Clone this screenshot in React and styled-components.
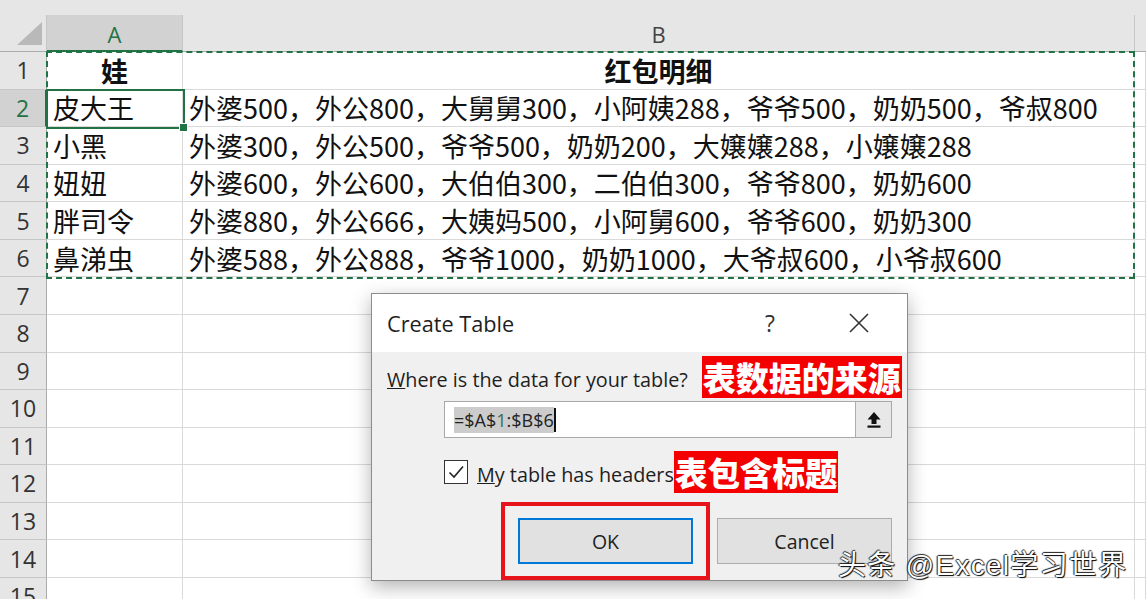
import styled, { createGlobalStyle } from 'styled-components';

const GlobalStyle = createGlobalStyle`
  html, body {
    margin: 0;
    padding: 0;
    background: #ffffff;
    overflow: hidden;
  }
`;

const green = '#217346';

const rows = [
  ['娃', '红包明细'],
  ['皮大王', '外婆500，外公800，大舅舅300，小阿姨288，爷爷500，奶奶500，爷叔800'],
  ['小黑', '外婆300，外公500，爷爷500，奶奶200，大嬢嬢288，小嬢嬢288'],
  ['妞妞', '外婆600，外公600，大伯伯300，二伯伯300，爷爷800，奶奶600'],
  ['胖司令', '外婆880，外公666，大姨妈500，小阿舅600，爷爷600，奶奶300'],
  ['鼻涕虫', '外婆588，外公888，爷爷1000，奶奶1000，大爷叔600，小爷叔600'],
  ['', ''], ['', ''], ['', ''], ['', ''], ['', ''], ['', ''], ['', ''], ['', ''], ['', ''],
];

const App = () => {
  return (
    <>
      <GlobalStyle />
      <Sheet>
        <TopStrip />
        <Grid>
          <Corner>
            <CornerTriangle />
          </Corner>
          <ColHead $selected>A</ColHead>
          <ColHead>B</ColHead>
          <ColHead $blank />
          {rows.map(([a, b], i) => (
            <Row key={i}>
              <RowHead $selected={i === 1}>{i + 1}</RowHead>
              <Cell $center={i === 0} $bold={i === 0}>{a}</Cell>
              <Cell $center={i === 0} $bold={i === 0}>{b}</Cell>
              <Cell />
            </Row>
          ))}
        </Grid>

        <CopyRange />
        <ActiveCell>
          <FillHandle />
        </ActiveCell>

        <Dialog>
          <TitleBar>
            <Title>Create Table</Title>
            <TitleButton>?</TitleButton>
            <TitleButton $close>
              <svg width="22" height="22" viewBox="0 0 22 22">
                <path d="M2 2 L20 20 M20 2 L2 20" stroke="#333" strokeWidth="1.6" />
              </svg>
            </TitleButton>
          </TitleBar>
          <DialogBody>
            <LineRow>
              <Label><u>W</u>here is the data for your table?</Label>
              <Note>表数据的来源</Note>
            </LineRow>
            <RangeInput>
              <RangeText>
                <Selected>=$A$<Ref>1</Ref>:$B$6</Selected>
                <Caret />
              </RangeText>
              <CollapseButton>
                <svg width="16" height="18" viewBox="0 0 16 18">
                  <polygon points="8,1 14.5,8.5 10.5,8.5 10.5,13 5.5,13 5.5,8.5 1.5,8.5" fill="#111" />
                  <rect x="1.5" y="14.5" width="13" height="2.2" fill="#111" />
                </svg>
              </CollapseButton>
            </RangeInput>
            <CheckRow>
              <CheckBox>
                <svg width="20" height="20" viewBox="0 0 20 20">
                  <polyline points="3.5,10.5 8,15 17,4.5" fill="none" stroke="#222" strokeWidth="1.6" />
                </svg>
              </CheckBox>
              <Label><u>M</u>y table has headers</Label>
              <Note $small>表包含标题</Note>
            </CheckRow>
            <ButtonRow>
              <Highlight>
                <DialogButton $default>OK</DialogButton>
              </Highlight>
              <DialogButton>Cancel</DialogButton>
            </ButtonRow>
          </DialogBody>
        </Dialog>

        <Watermark>头条 @Excel学习世界</Watermark>
      </Sheet>
    </>
  );
};

const Sheet = styled.div`
  position: relative;
  width: 1146px;
  height: 599px;
  overflow: hidden;
  background: #ffffff;
`;

const TopStrip = styled.div`
  height: 15px;
  background: #e6e6e6;
`;

const Grid = styled.div`
  display: grid;
  grid-template-columns: 47px 136px 952px 1fr;
  grid-template-rows: 37px;
  grid-auto-rows: 37.57px;
`;

const Row = styled.div`
  display: contents;
`;

const Corner = styled.div`
  position: relative;
  background: #e6e6e6;
  border-right: 1px solid #c6c6c6;
  border-bottom: 1px solid #ababab;
  box-sizing: border-box;
`;

const CornerTriangle = styled.div`
  position: absolute;
  right: 4px;
  bottom: 6px;
  width: 25px;
  height: 23px;
  background: #b9b9b9;
  clip-path: polygon(100% 0, 100% 100%, 0 100%);
`;

const ColHead = styled.div`
  display: flex;
  align-items: center;
  justify-content: center;
  box-sizing: border-box;
  background: ${(p) => (p.$selected ? '#d2d2d2' : '#e6e6e6')};
  color: ${(p) => (p.$selected ? green : '#444')};
  border-right: ${(p) => (p.$blank ? 'none' : '1px solid #c6c6c6')};
  border-bottom: ${(p) => (p.$selected ? `2px solid ${green}` : '1px solid #ababab')};
  font-family: 'Open Sans', 'Liberation Sans', sans-serif;
  font-size: 22px;
  padding-top: 2px;
`;

const RowHead = styled.div`
  display: flex;
  align-items: center;
  justify-content: center;
  box-sizing: border-box;
  background: ${(p) => (p.$selected ? '#d2d2d2' : '#e6e6e6')};
  color: ${(p) => (p.$selected ? green : '#333')};
  border-right: ${(p) => (p.$selected ? `2px solid ${green}` : '1px solid #ababab')};
  border-bottom: 1px solid #c6c6c6;
  font-family: 'Open Sans', 'Liberation Sans', sans-serif;
  font-size: 23px;
`;

const Cell = styled.div`
  display: flex;
  align-items: center;
  justify-content: ${(p) => (p.$center ? 'center' : 'flex-start')};
  box-sizing: border-box;
  padding-left: ${(p) => (p.$center ? '0' : '6px')};
  border-right: 1px solid #d9d9d9;
  border-bottom: 1px solid #d9d9d9;
  font-family: 'Noto Sans CJK SC', sans-serif;
  font-size: 27px;
  font-weight: ${(p) => (p.$bold ? 700 : 400)};
  line-height: 1;
  color: #111;
  white-space: nowrap;
  overflow: hidden;
`;

const CopyRange = styled.div`
  position: absolute;
  left: 46px;
  top: 51px;
  width: 1089px;
  height: 228px;
  box-sizing: border-box;
  border: 2px dashed ${green};
  pointer-events: none;
`;

const ActiveCell = styled.div`
  position: absolute;
  left: 46px;
  top: 89px;
  width: 139px;
  height: 40px;
  box-sizing: border-box;
  border: 2px solid ${green};
`;

const FillHandle = styled.div`
  position: absolute;
  right: -5px;
  bottom: -5px;
  width: 7px;
  height: 7px;
  background: ${green};
  border: 1px solid #ffffff;
`;

const Dialog = styled.div`
  position: absolute;
  left: 371px;
  top: 293px;
  width: 537px;
  height: 288px;
  box-sizing: border-box;
  display: flex;
  flex-direction: column;
  border: 1px solid #8c8c8c;
  background: #f0f0f0;
  box-shadow: 0 6px 18px rgba(0, 0, 0, 0.3);
  font-family: 'Open Sans', 'Noto Sans', sans-serif;
  color: #1e1e1e;
`;

const TitleBar = styled.div`
  display: flex;
  align-items: center;
  height: 58px;
  padding: 0 0 0 15px;
  background: #ffffff;
`;

const Title = styled.div`
  flex: 1;
  font-size: 21.7px;
  padding-top: 1px;
`;

const TitleButton = styled.div`
  display: flex;
  align-items: center;
  justify-content: center;
  width: ${(p) => (p.$close ? '72px' : '60px')};
  margin-right: ${(p) => (p.$close ? '12px' : '23px')};
  font-size: 23px;
  color: #333;
`;

const DialogBody = styled.div`
  flex: 1;
  display: flex;
  flex-direction: column;
  padding: 4px 15px 0 15px;
`;

const LineRow = styled.div`
  display: flex;
  align-items: center;
  height: 42px;
  gap: 14px;
`;

const Label = styled.span`
  flex-shrink: 0;
  font-size: 19.8px;
  color: #1e1e1e;
  white-space: nowrap;
  padding-top: 4px;
`;

const Note = styled.span`
  flex-shrink: 0;
  display: inline-flex;
  align-items: center;
  height: 42px;
  padding: 0 1px;
  background: #f40000;
  color: #ffffff;
  font-family: 'Noto Sans CJK SC', sans-serif;
  font-weight: 900;
  font-size: ${(p) => (p.$small ? '32.5px' : '33px')};
  line-height: 1;
  white-space: nowrap;
`;

const RangeInput = styled.div`
  display: flex;
  align-items: center;
  justify-content: space-between;
  height: 37px;
  margin: 3px 0 0 57px;
  box-sizing: border-box;
  border: 1px solid #a8a8a8;
  background: #ffffff;
`;

const RangeText = styled.div`
  display: flex;
  align-items: center;
  padding-left: 9px;
  font-size: 18px;
`;

const Selected = styled.span`
  background: #cccccc;
  color: #222;
  padding: 1px 0;
`;

const Ref = styled.span`
  color: #3a6e54;
`;

const Caret = styled.span`
  width: 2px;
  height: 24px;
  background: #111;
`;

const CollapseButton = styled.div`
  display: flex;
  align-items: center;
  justify-content: center;
  width: 36px;
  height: 35px;
  box-sizing: border-box;
  border-left: 1px solid #adadad;
  background: #e8e8e8;
`;

const CheckRow = styled.div`
  display: flex;
  align-items: center;
  height: 42px;
  margin: 13px 0 0 57px;
`;

const CheckBox = styled.div`
  display: flex;
  align-items: center;
  justify-content: center;
  width: 24px;
  height: 24px;
  margin-right: 9px;
  box-sizing: border-box;
  border: 1px solid #333;
  background: #ffffff;
`;

const ButtonRow = styled.div`
  display: flex;
  align-items: center;
  justify-content: flex-end;
  margin-top: 9px;
  gap: 7px;
`;

const Highlight = styled.div`
  display: flex;
  padding: 12px 13px;
  border: 4px solid #e8141c;
`;

const DialogButton = styled.div`
  display: flex;
  align-items: center;
  justify-content: center;
  width: 175px;
  height: 46px;
  box-sizing: border-box;
  background: #e1e1e1;
  border: ${(p) => (p.$default ? '2px solid #0078d7' : '1px solid #adadad')};
  font-size: 19.5px;
  color: #222;
`;

const Watermark = styled.div`
  position: absolute;
  left: 838px;
  top: 543px;
  font-family: 'Liberation Sans', 'Noto Sans CJK SC', sans-serif;
  font-size: 28px;
  letter-spacing: 1.3px;
  color: #ffffff;
  white-space: nowrap;
  text-shadow: 1px 1px 1px #000, -1px 0 1px #222, 0 -1px 1px #222;
`;

export default App;
